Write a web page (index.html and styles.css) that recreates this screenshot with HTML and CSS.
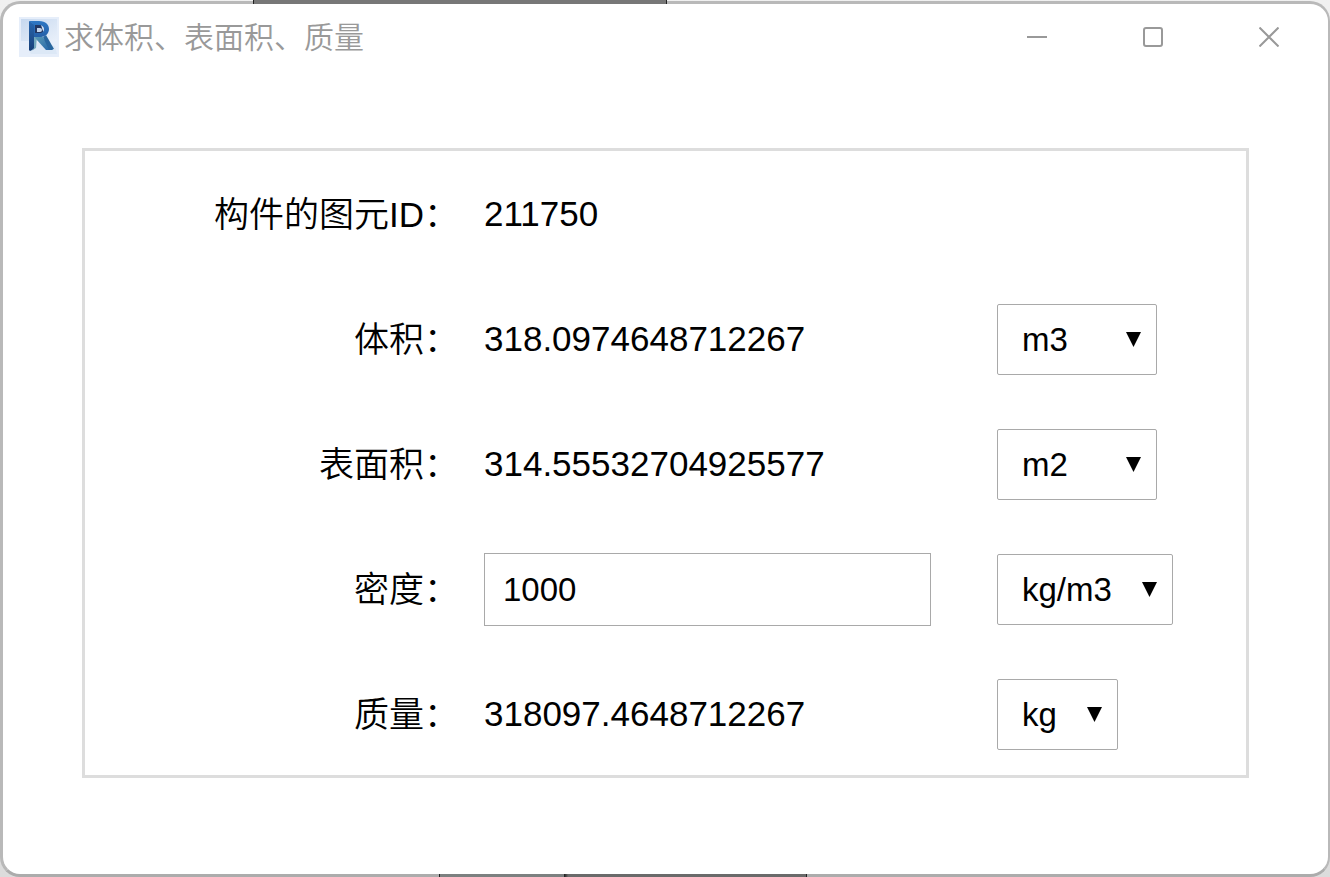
FILE: index.html
```html
<!DOCTYPE html>
<html lang="zh-CN">
<head>
<meta charset="utf-8">
<meta name="viewport" content="width=device-width, initial-scale=1">
<title>求体积、表面积、质量</title>
<link rel="stylesheet" href="styles.css">
</head>
<body>
<div class="window">
  <header class="titlebar">
    <svg class="app-icon" viewBox="0 0 40 40" aria-hidden="true">
      <defs>
        <linearGradient id="tile" x1="0" y1="0" x2="1" y2="1">
          <stop offset="0" stop-color="#c6d8ef"/>
          <stop offset="1" stop-color="#e9f0fa"/>
        </linearGradient>
        <linearGradient id="bowl" x1="0" y1="0" x2="0" y2="1">
          <stop offset="0" stop-color="#2f78c4"/>
          <stop offset="1" stop-color="#2560a8"/>
        </linearGradient>
        <linearGradient id="stem" x1="0" y1="0" x2="0" y2="1">
          <stop offset="0" stop-color="#2a68b0"/>
          <stop offset="1" stop-color="#173f78"/>
        </linearGradient>
        <linearGradient id="leg" x1="0" y1="0" x2="1" y2="1">
          <stop offset="0" stop-color="#5e9db5"/>
          <stop offset="1" stop-color="#1f62a8"/>
        </linearGradient>
      </defs>
      <rect width="40" height="40" fill="#e6eefa"/>
      <rect x="2" y="2" width="36" height="22" fill="url(#tile)"/>
      <path d="M10 34 20 25 36 29 38 37 12 37Z" fill="#dce8f6"/>
      <path d="M15 8H22L25 17H15Z" fill="#233762"/>
      <path d="M18 11H21Q23 11 23 13T21 15H18Z" fill="#c3d5ec"/>
      <path d="M10 4 15 7 15 32 11 34 10 33Z" fill="url(#stem)"/>
      <path d="M15 20 18 19 17 31 12 34 15 31Z" fill="#75a9be"/>
      <path d="M16 20 22 18 34 33 27 33 17 22Z" fill="url(#leg)"/>
      <path d="M24 20 27 18 35 32 30 33Z" fill="#28669e"/>
      <path fill-rule="evenodd" d="M10 4H20C27 4 30 8 30 12C30 17 26 20 21 20H15V8ZM16 8V16H20C24 16 25 14 25 12C25 10 23 8 20 8Z" fill="url(#bowl)"/>
    </svg>
    <h1 class="title">求体积、表面积、质量</h1>
    <div class="caption-buttons">
      <button class="caption-button" type="button" aria-label="最小化">
        <svg class="caption-glyph" viewBox="0 0 20 20" aria-hidden="true"><path d="M0 10H20"/></svg>
      </button>
      <button class="caption-button" type="button" aria-label="最大化">
        <svg class="caption-glyph" viewBox="0 0 20 20" aria-hidden="true"><rect x="1" y="1" width="18" height="18" rx="2"/></svg>
      </button>
      <button class="caption-button" type="button" aria-label="关闭">
        <svg class="caption-glyph" viewBox="0 0 20 20" aria-hidden="true"><path d="M0.5 0.5 19.5 19.5M19.5 0.5 0.5 19.5"/></svg>
      </button>
    </div>
  </header>
  <main class="content">
    <form class="panel">
      <div class="row">
        <label class="label" for="element-id">构件的图元ID：</label>
        <output class="value" id="element-id">211750</output>
      </div>
      <div class="row">
        <label class="label" for="volume">体积：</label>
        <output class="value" id="volume">318.0974648712267</output>
        <div class="unit unit-medium">
          <select class="select" aria-label="体积单位"><option>m3</option></select>
          <svg class="arrow" viewBox="0 0 15 15" aria-hidden="true"><path d="M0 0H15L7.5 15Z"/></svg>
        </div>
      </div>
      <div class="row">
        <label class="label" for="area">表面积：</label>
        <output class="value" id="area">314.55532704925577</output>
        <div class="unit unit-medium">
          <select class="select" aria-label="表面积单位"><option>m2</option></select>
          <svg class="arrow" viewBox="0 0 15 15" aria-hidden="true"><path d="M0 0H15L7.5 15Z"/></svg>
        </div>
      </div>
      <div class="row">
        <label class="label" for="density">密度：</label>
        <input class="input" id="density" type="text" value="1000">
        <div class="unit unit-wide">
          <select class="select" aria-label="密度单位"><option>kg/m3</option></select>
          <svg class="arrow" viewBox="0 0 15 15" aria-hidden="true"><path d="M0 0H15L7.5 15Z"/></svg>
        </div>
      </div>
      <div class="row">
        <label class="label" for="mass">质量：</label>
        <output class="value" id="mass">318097.4648712267</output>
        <div class="unit unit-narrow">
          <select class="select" aria-label="质量单位"><option>kg</option></select>
          <svg class="arrow" viewBox="0 0 15 15" aria-hidden="true"><path d="M0 0H15L7.5 15Z"/></svg>
        </div>
      </div>
    </form>
  </main>
</div>
</body>
</html>
```

FILE: styles.css
```css
* {
  box-sizing: border-box;
}

body {
  margin: 0;
  padding-top: 1px;
  min-height: 100vh;
  display: flex;
  position: relative;
  background: linear-gradient(#f0f0f0, #dcdcdc);
  color: #000;
  font-family: "Liberation Sans", "Noto Sans CJK SC", sans-serif;
}

/* Edges of the drawing that lies behind the window */
body::before,
body::after {
  content: "";
  position: absolute;
  border: solid #222;
  border-width: 0 1px;
}

body::before {
  top: 0;
  left: 19%;
  width: 31%;
  height: 4px;
  background: #777;
}

body::after {
  bottom: 0;
  left: 33%;
  width: 366px;
  height: 3px;
  background: linear-gradient(90deg, #7c8080 34%, #222 34%, #6a6a6a 35%);
}

.window {
  flex: 1;
  display: flex;
  flex-direction: column;
  border: 3px solid #b9b9b9;
  border-right-width: 2px;
  border-bottom-color: #acacac;
  border-radius: 20px;
  background: #fff;
}

.titlebar {
  display: flex;
  align-items: center;
  height: 66px;
  padding: 0 1px 0 16px;
  gap: 5px;
}

.app-icon {
  width: 40px;
  height: 40px;
}

.title {
  margin: 0;
  padding-top: 2px;
  color: #999;
  font-size: 30px;
  font-weight: 350;
  line-height: 40px;
}

.caption-buttons {
  display: flex;
  align-self: stretch;
  margin-left: auto;
}

.caption-button {
  display: flex;
  align-items: center;
  justify-content: center;
  width: 116px;
  padding: 0;
  border: 0;
  border-top-right-radius: 16px;
  background: none;
}

.caption-glyph {
  width: 20px;
  height: 20px;
  fill: none;
  stroke: #999;
  stroke-width: 2;
}

.content {
  padding: 78px 79px 80px;
}

.panel {
  display: grid;
  row-gap: 52px;
  padding: 27px 0 24px;
  border: 3px solid #ddd;
}

.row {
  display: grid;
  grid-template-columns: 374fr 488fr 249fr;
  gap: 25px;
  align-items: center;
  min-height: 73px;
}

.label,
.value {
  font-size: 35px;
  font-weight: 350;
  line-height: 48px;
  white-space: nowrap;
}

.label {
  text-align: right;
}

.value {
  padding-bottom: 2px;
}

.input,
.select {
  border: 1px solid #a9a9a9;
  background: #fff;
  color: #000;
  font-family: inherit;
  font-size: 33px;
}

.input {
  width: calc(100% - 41px);
  height: 73px;
  padding: 0 18px;
}

.unit {
  position: relative;
}

.unit-narrow {
  width: 121px;
}

.unit-medium {
  width: 160px;
}

.unit-wide {
  width: 176px;
}

.select {
  display: block;
  width: 100%;
  height: 71px;
  padding: 0 24px;
  border-radius: 2px;
  appearance: none;
}

.arrow {
  position: absolute;
  top: 28px;
  right: 16px;
  width: 15px;
  height: 15px;
  pointer-events: none;
}
```
